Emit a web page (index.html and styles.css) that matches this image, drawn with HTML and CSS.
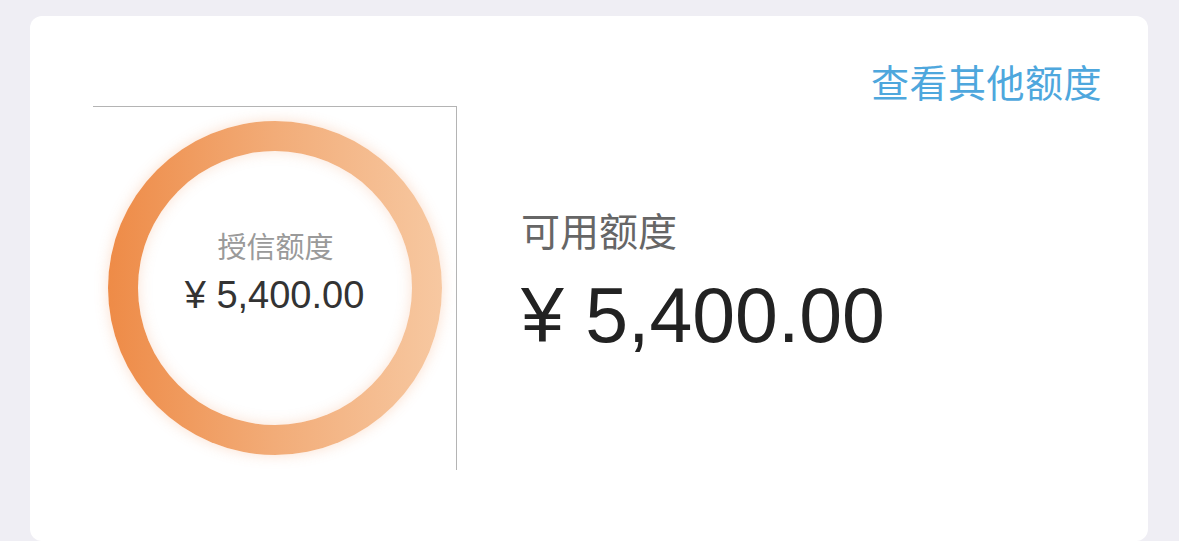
FILE: index.html
```html
<!DOCTYPE html>
<html lang="zh">
<head>
<meta charset="utf-8">
<link rel="stylesheet" href="styles.css">
</head>
<body>
<div class="card">
  <div class="head">
    <span class="link">查看其他额度</span>
  </div>
  <div class="main">
    <div class="chart">
      <div class="ring">
        <div class="hole">
          <div class="hole-label">授信额度</div>
          <div class="hole-amount">¥ 5,400.00</div>
        </div>
      </div>
    </div>
    <div class="info">
      <div class="info-label">可用额度</div>
      <div class="info-amount">¥ 5,400.00</div>
    </div>
  </div>
</div>
</body>
</html>
```

FILE: styles.css
```css
html, body {
  margin: 0;
  padding: 0;
  background: #efeef4;
  height: 541px;
  overflow: hidden;
}
body {
  padding-top: 16px;
  padding-left: 30px;
  box-sizing: border-box;
  font-family: "Liberation Sans", "Noto Sans CJK SC", sans-serif;
}
.card {
  width: 1118px;
  height: 525px;
  background: #ffffff;
  border-radius: 12px;
  box-sizing: border-box;
  padding: 46px 46px 0 63px;
}
.head {
  display: flex;
  justify-content: flex-end;
}
.link {
  font-family: "Noto Sans CJK SC", sans-serif;
  font-size: 38px;
  line-height: 38px;
  color: #4ea7dd;
  letter-spacing: 0.5px;
}
.main {
  display: flex;
  margin-top: 6px;
}
.chart {
  width: 364px;
  height: 364px;
  box-sizing: border-box;
  border-top: 1px solid #b4b4b4;
  border-right: 1px solid #b4b4b4;
  display: flex;
  align-items: center;
  justify-content: center;
}
.ring {
  width: 334px;
  height: 334px;
  border-radius: 50%;
  background: linear-gradient(90deg, #ee8b47 0%, #f2ac78 50%, #f7c8a1 100%);
  box-shadow: 0 0 14px rgba(240, 140, 80, 0.28);
  display: flex;
  align-items: center;
  justify-content: center;
  margin-top: -1px;
}
.hole {
  width: 274px;
  height: 274px;
  border-radius: 50%;
  background: #ffffff;
  box-shadow: inset 0 0 14px rgba(240, 140, 80, 0.25);
  display: flex;
  flex-direction: column;
  align-items: center;
  justify-content: center;
  box-sizing: border-box;
  padding-bottom: 32px;
}
.hole-label {
  font-family: "Noto Sans CJK SC", sans-serif;
  font-size: 29px;
  line-height: 29px;
  color: #9a9a9a;
  margin-left: 2px;
}
.hole-amount {
  margin-top: 16px;
  font-size: 38px;
  line-height: 38px;
  color: #333333;
}
.info {
  margin-left: 64px;
  padding-top: 104px;
}
.info-label {
  font-family: "Noto Sans CJK SC", sans-serif;
  font-size: 39px;
  line-height: 38px;
  color: #666666;
}
.info-amount {
  margin-top: 29px;
  font-size: 77px;
  line-height: 76px;
  color: #222222;
}
```
